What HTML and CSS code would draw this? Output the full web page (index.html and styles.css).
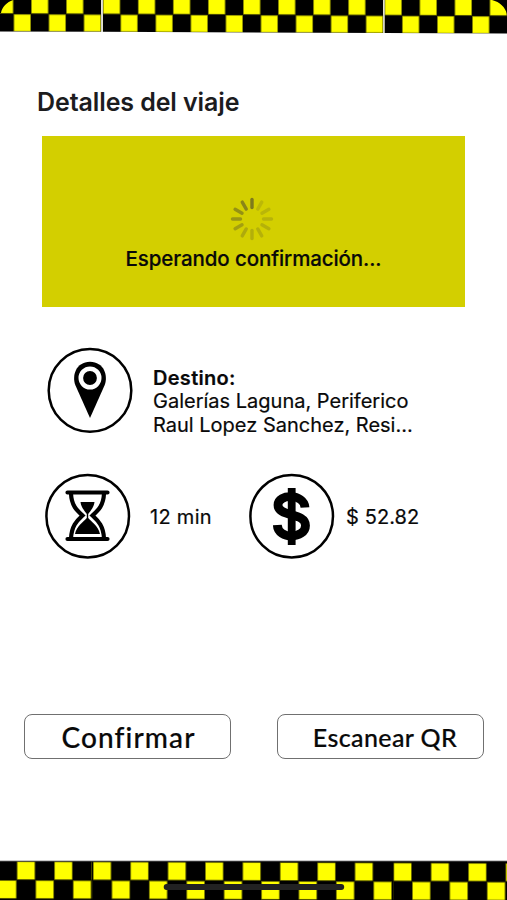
FILE: index.html
```html
<!DOCTYPE html>
<html lang="es">
<head>
  <meta charset="utf-8">
  <meta name="viewport" content="width=device-width, initial-scale=1.0">
  <title>Detalles del viaje</title>
  <link rel="stylesheet" href="styles.css">
</head>
<body>
  <div class="pantalla">
    <!-- Franja de taxi superior -->
    <svg class="franja" width="507" height="36" viewBox="0 0 507 36">
      <defs>
        <pattern id="cuadros-sup" width="35.05" height="40" patternUnits="userSpaceOnUse" patternTransform="translate(102.8 -4)">
          <rect width="36" height="40" fill="#000"/>
          <rect x="0.3" y="-1" width="17" height="18.2" fill="#ff0" stroke="#6b6b00" stroke-width="0.5"/>
          <rect x="17.9" y="18.2" width="16.9" height="16.9" fill="#ff0" stroke="#6b6b00" stroke-width="0.5"/>
        </pattern>
      </defs>
      <g transform="skewY(0.25)">
        <rect x="1.7" y="-4" width="101.2" height="35.4" fill="url(#cuadros-sup)" transform="translate(-1.7 0)"/>
        <rect x="102.8" y="-4" width="280.4" height="35.4" fill="url(#cuadros-sup)"/>
        <rect x="383.4" y="-4" width="122.6" height="35.4" fill="url(#cuadros-sup)" transform="translate(1.2 0)"/>
      </g>
      <path d="M0 0H13C7 2 2 7 1 13H0Z" fill="#000"/>
      <path d="M492 0H507V14C505 7 500 2 492 0Z" fill="#000"/>
    </svg>

    <main class="contenido">
      <h1 class="titulo">Detalles del viaje</h1>

      <section class="espera">
        <svg class="cargador" width="44" height="44" viewBox="-22 -22 44 44" stroke="#625f26" stroke-width="3.4" stroke-linecap="round">
          <path d="M0-11.5V-19.5" opacity=".75"/>
          <path d="M0-11.5V-19.5" opacity=".2" transform="rotate(30)"/>
          <path d="M0-11.5V-19.5" opacity=".22" transform="rotate(60)"/>
          <path d="M0-11.5V-19.5" opacity=".24" transform="rotate(90)"/>
          <path d="M0-11.5V-19.5" opacity=".26" transform="rotate(120)"/>
          <path d="M0-11.5V-19.5" opacity=".26" transform="rotate(150)"/>
          <path d="M0-11.5V-19.5" opacity=".28" transform="rotate(180)"/>
          <path d="M0-11.5V-19.5" opacity=".32" transform="rotate(210)"/>
          <path d="M0-11.5V-19.5" opacity=".42" transform="rotate(240)"/>
          <path d="M0-11.5V-19.5" opacity=".5" transform="rotate(270)"/>
          <path d="M0-11.5V-19.5" opacity=".55" transform="rotate(300)"/>
          <path d="M0-11.5V-19.5" opacity=".65" transform="rotate(330)"/>
        </svg>
        <p class="espera-texto">Esperando confirmación...</p>
      </section>

      <section class="destino">
        <svg class="icono" width="86" height="86" viewBox="0 0 86 86">
          <circle cx="43" cy="43.4" r="41.3" fill="#fff" stroke="#000" stroke-width="2.5"/>
          <path d="M43 71L28.5 38.5C24.5 29 29 14.7 43 14.7S61.5 29 57.5 38.5Z" fill="#000"/>
          <circle cx="43" cy="31" r="9.2" fill="none" stroke="#fff" stroke-width="4.6"/>
        </svg>
        <div class="destino-texto">
          <strong>Destino:</strong>
          <span>Galerías Laguna, Periferico</span>
          <span>Raul Lopez Sanchez, Resi...</span>
        </div>
      </section>

      <section class="datos">
        <svg class="icono" width="86" height="86" viewBox="0 0 86 86">
          <circle cx="42.7" cy="43.2" r="41.3" fill="#fff" stroke="#000" stroke-width="2.5"/>
          <path d="M22.5 19.5H62.5M22.5 66H62.5" stroke="#000" stroke-width="4.2" stroke-linecap="round"/>
          <path d="M26 20.5C26.5 32.5 31.5 37 37.5 42.5C31.5 48 26.5 53.5 26 65.5M59 20.5C58.5 32.5 53.5 37 47.5 42.5C53.5 48 58.5 53.5 59 65.5" fill="none" stroke="#000" stroke-width="4.2"/>
          <path d="M35.5 29H49.5C49 34 45.5 38 43.2 41V45C46.5 49 53.5 53 55 61H30C31.5 53 38.5 49 41.8 45V41C39.5 38 36 34 35.5 29Z" fill="#000"/>
        </svg>
        <span class="tiempo">12 min</span>
        <svg class="icono" width="86" height="86" viewBox="0 0 86 86">
          <circle cx="42.7" cy="43.2" r="41.3" fill="#fff" stroke="#000" stroke-width="2.5"/>
          <path d="M42.7 15V72" stroke="#000" stroke-width="7.8"/>
          <path d="M56 34.5C55 20.5 29 20.5 29 32C29 44.5 56.5 39 56.5 52.5C56.5 66 29 67 28.3 52" fill="none" stroke="#000" stroke-width="8.8"/>
        </svg>
        <span class="precio">$ 52.82</span>
      </section>

      <div class="botones">
        <button class="boton boton-confirmar" type="button">Confirmar</button>
        <button class="boton boton-qr" type="button">Escanear QR</button>
      </div>
    </main>

    <!-- Franja de taxi inferior -->
    <svg class="franja" width="507" height="40" viewBox="0 0 507 40">
      <defs>
        <pattern id="cuadros-inf" width="37.4" height="44" patternUnits="userSpaceOnUse" patternTransform="translate(92.8 0)">
          <rect width="38" height="44" fill="#000"/>
          <rect x="0.4" y="1.8" width="17.7" height="17.5" fill="#ff0" stroke="#6b6b00" stroke-width="0.5"/>
          <rect x="19.1" y="20.5" width="17.9" height="17.7" fill="#ff0" stroke="#6b6b00" stroke-width="0.5"/>
        </pattern>
      </defs>
      <rect y="1" width="507" height="39" fill="#000"/>
      <g transform="skewY(0.2)">
        <rect x="1.3" y="1" width="92" height="43" fill="url(#cuadros-inf)" transform="translate(-1.3 0)"/>
        <rect x="92.8" y="1" width="299.2" height="43" fill="url(#cuadros-inf)"/>
        <rect x="392" y="1" width="117" height="43" fill="url(#cuadros-inf)" transform="translate(1.3 0)"/>
      </g>
      <path d="M0 1H507" stroke="#777" stroke-width="0.8"/>
      <rect x="163.7" y="24" width="180.5" height="6" rx="3" fill="#222"/>
    </svg>
  </div>
</body>
</html>
```
FILE: styles.css
```css
* {
  box-sizing: border-box;
}

body {
  margin: 0;
  background: #fff;
  color: #090909;
  font-family: Inter, "Liberation Sans", sans-serif;
}

.pantalla {
  display: flex;
  flex-direction: column;
  width: 507px;
  height: 900px;
  overflow: hidden;
}

.franja {
  display: block;
  flex: none;
}

.contenido {
  flex: 1;
  display: flex;
  flex-direction: column;
}

.titulo {
  margin: 50px 0 0 37px;
  font-size: 25px;
  line-height: 32px;
  font-weight: 600;
  letter-spacing: -0.1px;
  color: #1c1c1e;
}

.espera {
  display: flex;
  flex-direction: column;
  align-items: center;
  width: 423px;
  height: 171px;
  margin: 18px 0 0 42px;
  padding-top: 61px;
  background: #d3cf00;
}

.cargador {
  margin-right: 3px;
}

.espera-texto {
  margin: 5px 0 0;
  font-size: 20.5px;
  line-height: 26px;
  font-weight: 500;
  letter-spacing: -0.1px;
  -webkit-text-stroke: 0.2px;
}

.icono {
  flex: none;
}

.destino {
  display: flex;
  margin: 40px 0 0 47px;
}

.destino-texto {
  display: flex;
  flex-direction: column;
  margin: 21px 0 0 20px;
  font-size: 20px;
  line-height: 24px;
  white-space: nowrap;
  -webkit-text-stroke: 0.2px;
}

.destino-texto strong {
  font-size: 20px;
  line-height: 21px;
  font-weight: 600;
  letter-spacing: 0.3px;
}

.datos {
  display: flex;
  align-items: center;
  margin: 36px 0 0 45px;
  font-size: 20px;
  line-height: 24px;
  -webkit-text-stroke: 0.2px;
}

.tiempo {
  width: 99px;
  margin-left: 19px;
  padding-top: 2px;
  letter-spacing: 0.3px;
}

.precio {
  margin-left: 11px;
  padding-top: 2px;
  letter-spacing: 0.1px;
}

.botones {
  display: flex;
  gap: 46px;
  margin: 155px 0 0 24px;
}

.boton {
  width: 207px;
  height: 45px;
  padding: 0;
  background: #fff;
  border: 1.5px solid #707070;
  border-radius: 8px;
  color: #090909;
  font-family: Lato, "Liberation Sans", sans-serif;
  font-weight: 500;
  white-space: nowrap;
  -webkit-text-stroke: 0.2px;
}

.boton-confirmar {
  padding-left: 2px;
  font-size: 28px;
  letter-spacing: 1.1px;
}

.boton-qr {
  padding-left: 9px;
  font-size: 25px;
  letter-spacing: 0.4px;
}
```
